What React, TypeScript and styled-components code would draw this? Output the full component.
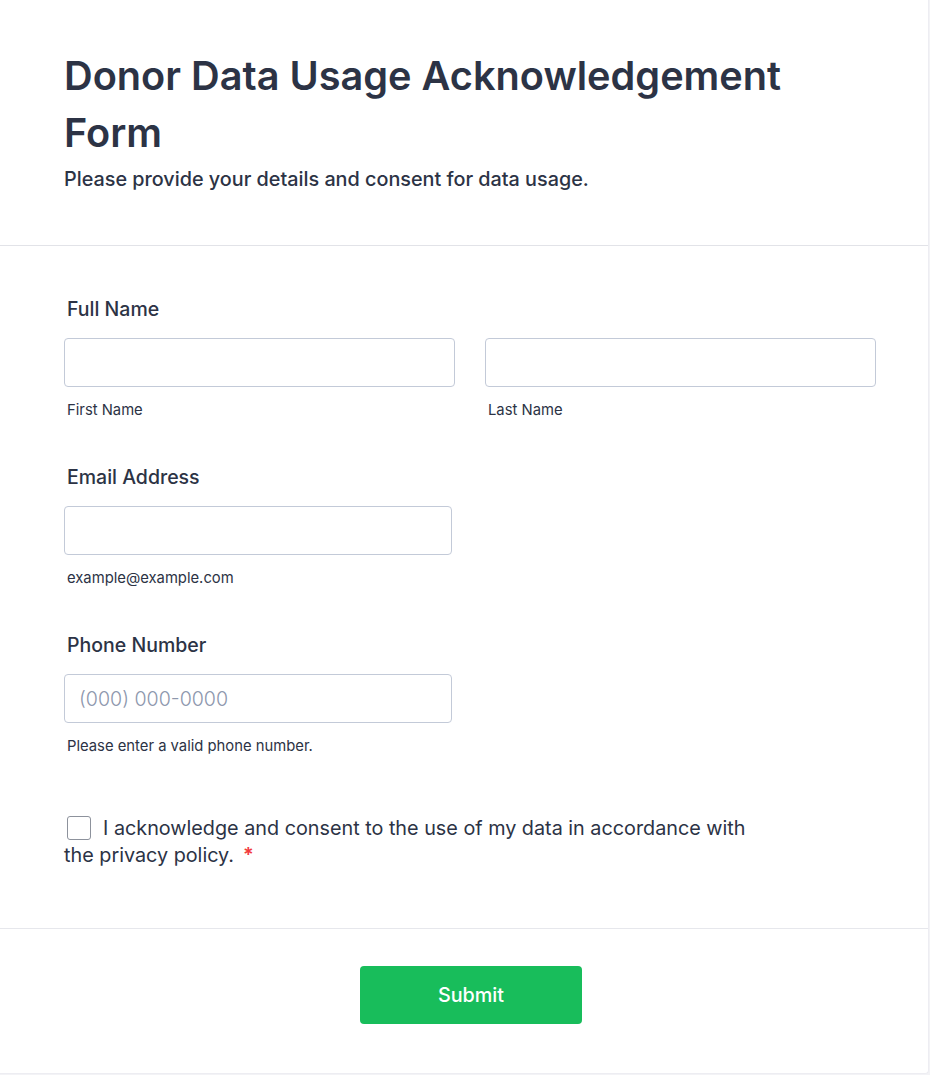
import React from "react";
import styled, { createGlobalStyle } from "styled-components";

const GlobalStyle = createGlobalStyle`
  html, body {
    margin: 0;
    padding: 0;
    background: #f3f3f6;
  }
  body {
    font-family: Inter, "Noto Sans", sans-serif;
    color: #2c3345;
  }
  * {
    box-sizing: border-box;
  }
`;

const Card = styled.form`
  width: 929px;
  min-height: 1074px;
  background: #ffffff;
  border-right: 1px solid #ededf2;
  border-bottom: 1px solid #ededf2;
  border-bottom-right-radius: 4px;
  display: flex;
  flex-direction: column;
`;

const Header = styled.header`
  padding: 48px 64px 52px;
  border-bottom: 1px solid #e2e3e8;
`;

const Title = styled.h1`
  margin: 0;
  font-size: 39.7px;
  line-height: 57px;
  font-weight: 600;
  color: #2c3345;
  max-width: 780px;
`;

const Subtitle = styled.p`
  margin: 4px 0 0;
  font-size: 19.8px;
  line-height: 27px;
  font-weight: 500;
  color: #2c3345;
`;

const Body = styled.div`
  padding: 50px 64px 59px;
  display: flex;
  flex-direction: column;
  gap: 44px;
  border-bottom: 1px solid #e6e7ec;
`;

const Field = styled.div`
  display: flex;
  flex-direction: column;
`;

const Label = styled.label`
  font-size: 19.5px;
  line-height: 27px;
  font-weight: 500;
  padding-left: 3px;
  margin-bottom: 15px;
`;

const Row = styled.div`
  display: grid;
  grid-template-columns: 391px 391px;
  column-gap: 30px;
`;

const Column = styled.div<{ $width?: number }>`
  display: flex;
  flex-direction: column;
  width: ${(p) => (p.$width ? `${p.$width}px` : "auto")};
`;

const Input = styled.input`
  width: 100%;
  height: 49px;
  border: 1px solid #c3cad8;
  border-radius: 4px;
  padding: 0 14px;
  font-family: Inter, "Noto Sans", sans-serif;
  font-size: 19.6px;
  color: #2c3345;
  background: #ffffff;
  outline: none;

  &::placeholder {
    color: #8d97ad;
    font-weight: 300;
  }
`;

const SubLabel = styled.span`
  margin-top: 13px;
  padding-left: 3px;
  font-size: 14.8px;
  line-height: 20px;
  color: #2c3345;
`;

const Consent = styled.div`
  display: block;
  max-width: 700px;
  margin-top: 15px;
  font-size: 19.8px;
  line-height: 27px;
  color: #2c3345;
`;

const Box = styled.input.attrs({ type: "checkbox" })`
  appearance: none;
  width: 24px;
  height: 24px;
  margin: 0 12px 0 3px;
  border: 1px solid #8d929c;
  border-radius: 3px;
  vertical-align: -5px;
  background: #ffffff;
`;

const Required = styled.span`
  display: inline-block;
  color: #f23a3c;
  font-weight: 600;
  margin-left: 9px;
`;

const Footer = styled.div`
  display: flex;
  justify-content: center;
  padding: 37px 0 49px;
`;

const SubmitButton = styled.button`
  width: 222px;
  height: 58px;
  margin-left: 14px;
  border: none;
  border-radius: 4px;
  background: #18bd5b;
  color: #ffffff;
  font-family: Inter, "Noto Sans", sans-serif;
  font-size: 19.8px;
  font-weight: 500;
  cursor: pointer;
`;

const App: React.FC = () => {
  return (
    <>
      <GlobalStyle />
      <Card onSubmit={(e) => e.preventDefault()}>
        <Header>
          <Title>Donor Data Usage Acknowledgement Form</Title>
          <Subtitle>Please provide your details and consent for data usage.</Subtitle>
        </Header>
        <Body>
          <Field>
            <Label>Full Name</Label>
            <Row>
              <Column>
                <Input type="text" />
                <SubLabel>First Name</SubLabel>
              </Column>
              <Column>
                <Input type="text" />
                <SubLabel>Last Name</SubLabel>
              </Column>
            </Row>
          </Field>
          <Field>
            <Label>Email Address</Label>
            <Column $width={388}>
              <Input type="email" />
              <SubLabel>example@example.com</SubLabel>
            </Column>
          </Field>
          <Field>
            <Label>Phone Number</Label>
            <Column $width={388}>
              <Input type="tel" placeholder="(000) 000-0000" />
              <SubLabel>Please enter a valid phone number.</SubLabel>
            </Column>
          </Field>
          <Consent>
            <Box id="consent" />
            <label htmlFor="consent">
              I acknowledge and consent to the use of my data in accordance with the privacy policy.
            </label>
            <Required>*</Required>
          </Consent>
        </Body>
        <Footer>
          <SubmitButton type="submit">Submit</SubmitButton>
        </Footer>
      </Card>
    </>
  );
};

export default App;
